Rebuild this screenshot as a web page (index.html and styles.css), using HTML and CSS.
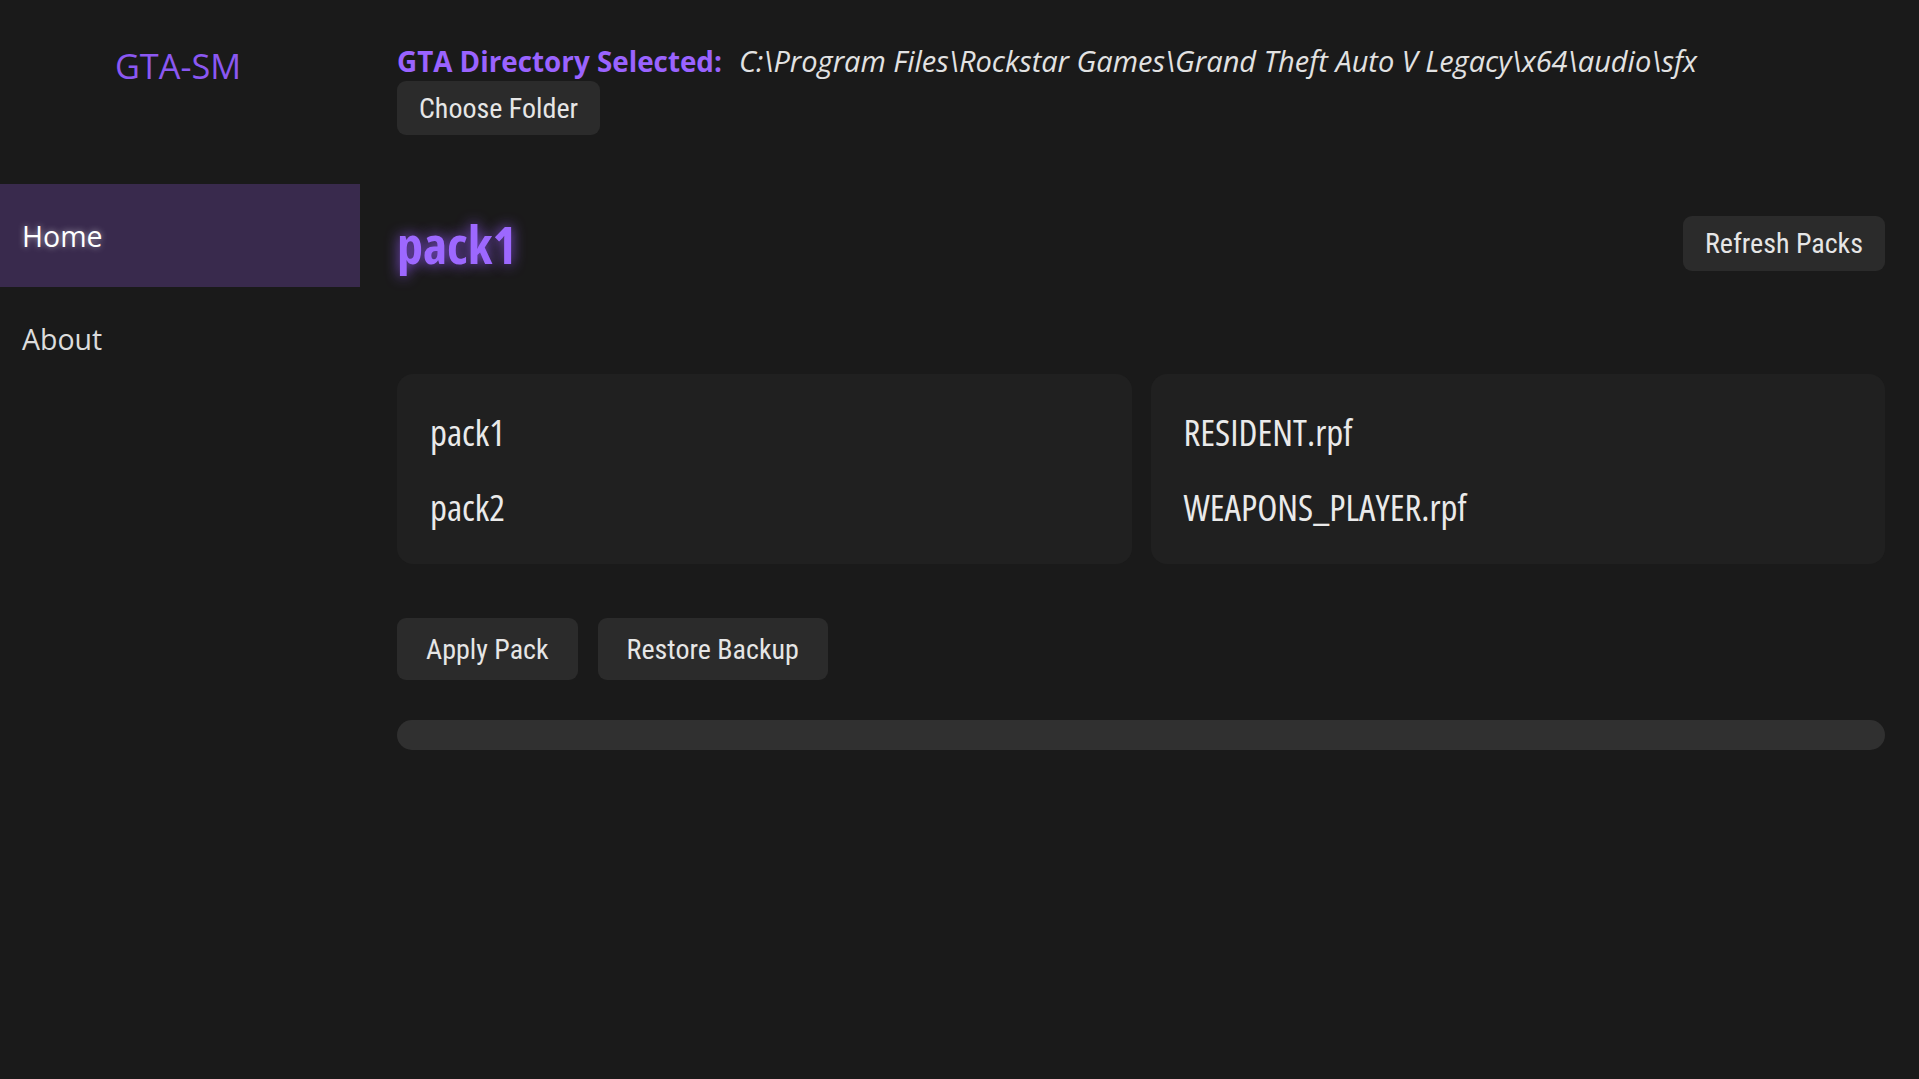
FILE: index.html
```html
<!DOCTYPE html>
<html lang="en">
<head>
<meta charset="utf-8">
<title>GTA-SM</title>
<link rel="stylesheet" href="styles.css">
</head>
<body>
<aside class="sidebar">
  <div class="logo">GTA-SM</div>
  <nav class="nav">
    <a class="nav-item active" href="#">Home</a>
    <a class="nav-item" href="#">About</a>
  </nav>
</aside>
<main class="main">
  <header class="dir-header">
    <div class="dir-line">
      <span class="dir-label">GTA Directory Selected:</span>
      <span class="dir-path">C:\Program Files\Rockstar Games\Grand Theft Auto V Legacy\x64\audio\sfx</span>
    </div>
    <button class="btn btn-small">Choose Folder</button>
  </header>
  <section class="title-row">
    <h1 class="pack-title">pack1</h1>
    <button class="btn btn-small">Refresh Packs</button>
  </section>
  <section class="lists">
    <ul class="card">
      <li class="card-item">pack1</li>
      <li class="card-item">pack2</li>
    </ul>
    <ul class="card">
      <li class="card-item">RESIDENT.rpf</li>
      <li class="card-item">WEAPONS_PLAYER.rpf</li>
    </ul>
  </section>
  <section class="actions">
    <button class="btn btn-large">Apply Pack</button>
    <button class="btn btn-large">Restore Backup</button>
  </section>
  <div class="progress"><div class="progress-fill" style="width:0%"></div></div>
</main>
</body>
</html>
```
FILE: styles.css
```css
* { box-sizing: border-box; }
html, body { height: 100%; }
body {
  margin: 0;
  display: flex;
  background: #1a1a1a;
  color: #e6e6e6;
  font-family: "Open Sans", "Noto Sans", sans-serif;
}
.sidebar {
  width: 360px;
  flex: none;
  background: #1a1a1a;
}
.logo {
  height: 184px;
  padding-top: 40px;
  padding-right: 4px;
  text-align: center;
  font-size: 34.3px;
  line-height: 52px;
  font-weight: 400;
  color: #8b58f2;
}
.nav { display: flex; flex-direction: column; }
.nav-item {
  height: 103px;
  display: flex;
  align-items: center;
  padding-left: 22px;
  font-size: 28.5px;
  color: #dcdcdc;
  text-decoration: none;
}
.nav-item.active {
  background: #392a4d;
  color: #ffffff;
  text-shadow: 0 0 6px rgba(255,255,255,0.55);
}
.main {
  flex: 1;
  padding: 39px 34px 0 37px;
  min-width: 0;
}
.dir-line {
  display: flex;
  align-items: baseline;
  gap: 17px;
  height: 42px;
  padding-top: 2px;
  white-space: nowrap;
}
.dir-label {
  font-size: 27.8px;
  font-weight: 700;
  color: #9a63ff;
}
.dir-path {
  font-size: 29px;
  font-style: italic;
  color: #e2e2e2;
}
.btn {
  font-family: "Roboto Condensed", "Roboto", sans-serif;
  font-size: 28px;
  color: #e6e6e6;
  background: #2b2b2b;
  border: none;
  border-radius: 9px;
  cursor: pointer;
}
.btn-small { height: 54px; padding: 0 22px; }
.btn-large { height: 62px; padding: 0 29px; }
.title-row {
  margin-top: 81px;
  height: 55px;
  display: flex;
  align-items: center;
  justify-content: space-between;
}
.title-row .btn-small { height: 55px; }
.pack-title {
  margin: 0;
  font-size: 52px;
  font-weight: 700;
  font-stretch: 75%;
  color: #9d68ff;
  text-shadow: 0 0 14px rgba(150, 90, 255, 0.85);
}
.lists {
  margin-top: 103px;
  display: grid;
  grid-template-columns: 1fr 1fr;
  gap: 19px;
}
.card {
  list-style: none;
  margin: 0;
  height: 190px;
  padding: 20px 33px;
  background: #202020;
  border-radius: 16px;
}
.card-item {
  height: 75px;
  display: flex;
  align-items: center;
  font-size: 37px;
  font-stretch: 75%;
  color: #eaeaea;
}
.actions {
  margin-top: 54px;
  display: flex;
  gap: 20px;
}
.progress {
  margin-top: 40px;
  height: 30px;
  border-radius: 15px;
  background: #303030;
  overflow: hidden;
}
.progress-fill { height: 100%; background: #9d68ff; }
```
